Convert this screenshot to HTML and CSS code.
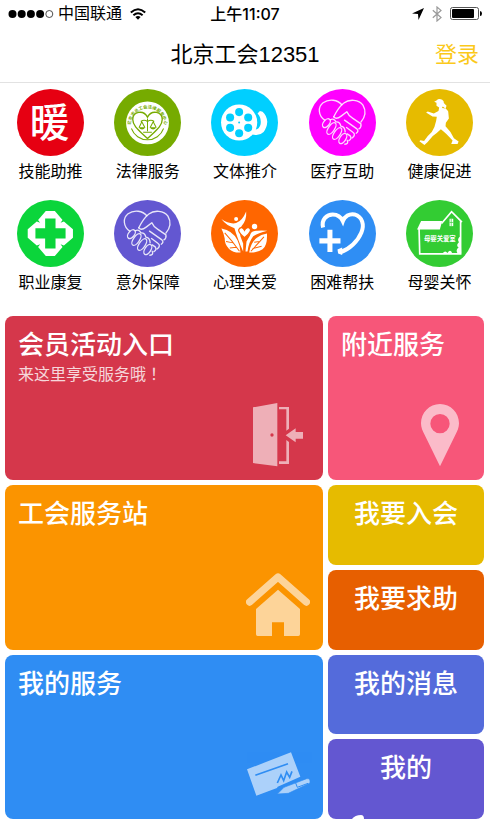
FILE: index.html
```html
<!DOCTYPE html>
<html lang="zh-CN">
<head>
<meta charset="utf-8">
<meta name="viewport" content="width=device-width, initial-scale=1">
<title>北京工会12351</title>
<link rel="stylesheet" href="styles.css">
</head>
<body>
<div class="status">
  <div class="status-side">
    <svg class="signal" viewBox="0 0 46 10" width="46" height="10" aria-hidden="true"><circle cx="4.500" cy="5" r="4"/><circle cx="13.700" cy="5" r="4"/><circle cx="22.900" cy="5" r="4"/><circle cx="32.100" cy="5" r="4"/><circle cx="41.300" cy="5" r="3.500" fill="none" stroke="#222" stroke-width=".8"/></svg>
    <span>中国联通</span>
    <svg class="wifi" viewBox="0 0 16 12" width="16" height="12" fill="none" stroke="#000" stroke-width="2" aria-hidden="true"><path d="M.8 4.500Q8-2 15.200 4.500M3.400 7.200Q8 3.200 12.600 7.200"/><path d="M5.400 9Q8 7 10.600 9L8 11.700Z" fill="#000" stroke="none"/></svg>
  </div>
  <time class="clock">上午11:07</time>
  <div class="status-side status-end">
    <svg viewBox="0 0 12 12" width="12" height="12" aria-hidden="true"><path d="M12 0L6.500 12L6 6L0 5.500Z"/></svg>
    <svg viewBox="0 0 10 16" width="10" height="16" fill="none" stroke="#999" stroke-width="1.200" aria-hidden="true"><path d="M.8 4.200L9 11.600L5 15V1L9 4.400L.8 11.800"/></svg>
    <svg viewBox="0 0 32 13" width="32" height="13" aria-hidden="true"><rect x=".5" y=".5" width="28" height="12" rx="2" fill="none" stroke="#555"/><rect x="2" y="2" width="22" height="9" rx="1"/><path d="M30 4Q32 4 32 6.500Q32 9 30 9Z"/></svg>
  </div>
</div>
<header class="nav">
  <h1>北京工会12351</h1>
  <a class="login" href="#">登录</a>
</header>
<nav class="services">
  <a href="#" class="service">
    <svg viewBox="0 0 200 200" aria-hidden="true"><circle cx="100" cy="100" r="100" fill="#e60012"/><text x="97" y="142" class="seal">暖</text></svg>
    <span>技能助推</span>
  </a>
  <a href="#" class="service">
    <svg viewBox="0 0 200 200" aria-hidden="true"><circle cx="100" cy="100" r="100" fill="#76ab00"/><circle cx="100" cy="101" r="64" fill="#fff"/>
      <path id="ring" d="M50 108A50 50 0 1 1 150 108" fill="none"/>
      <text class="ring-text"><textPath href="#ring" startOffset="50%">北京市总工会法律服务中心</textPath></text>
      <g fill="none" stroke="#76ab00" stroke-width="4"><path d="M52 118A51 51 0 0 0 148 118" stroke-width="3"/><path d="M100 148C78 126 56 112 56 91C56 67 88 61 100 84C112 61 144 67 144 91C144 112 122 126 100 148Z"/>
      <path d="M100 88V126M80 97Q90 90 100 97Q110 90 120 97M87 129H113M83 98L75 115M83 98L92 115M117 98L108 115M117 98L126 115" stroke-width="3"/></g>
      <path d="M73 114H94Q84 128 73 114ZM106 114H127Q117 128 106 114Z" fill="#76ab00"/></svg>
    <span>法律服务</span>
  </a>
  <a href="#" class="service">
    <svg viewBox="0 0 200 200" aria-hidden="true"><circle cx="100" cy="100" r="100" fill="#00cfff"/>
      <path d="M146 66L139 73Q151 86 148 105Q145 120 130 122L120 134Q142 143 157 128Q167 116 168 98Q166 78 154 68Z" fill="#fff"/>
      <circle cx="84" cy="100" r="54" fill="#fff"/><g fill="#00cfff"><circle cx="84" cy="69" r="12"/><circle cx="84" cy="132" r="12"/><circle cx="57" cy="85" r="12"/><circle cx="111" cy="85" r="12"/><circle cx="57" cy="116" r="12"/><circle cx="111" cy="116" r="12"/><circle cx="84" cy="100" r="3"/></g></svg>
    <span>文体推介</span>
  </a>
  <a href="#" class="service">
    <svg viewBox="0 0 200 200" aria-hidden="true"><circle cx="100" cy="100" r="100" fill="#ff00ff"/>
      <g id="hands" fill="none" stroke="#fff" stroke-opacity=".85" stroke-width="4" stroke-linecap="round" stroke-linejoin="round">
        <path d="M47 93C28 80 25 54 42 41C60 28 86 32 98 47"/>
        <path d="M74 83C82 67 91 52 104 42C120 29 149 31 161 48C171 65 167 84 155 99"/>
        <path d="M74 83C80 91 88 87 96 81L113 68Q118 80 130 87L155 104Q157 114 149 119"/>
        <path d="M106 93L143 119Q150 126 141 132M112 115L131 129Q141 136 129 146M114 134L123 140Q129 149 119 154M114 153Q119 164 107 165"/>
        <ellipse cx="52" cy="102" rx="9" ry="15" transform="rotate(38 52 102)"/><ellipse cx="67" cy="118" rx="9" ry="20" transform="rotate(35 67 118)"/><ellipse cx="84" cy="133" rx="9" ry="20" transform="rotate(35 84 133)"/><ellipse cx="101" cy="148" rx="9" ry="17" transform="rotate(32 101 148)"/>
        <path d="M63 92Q75 86 80 98Q93 97 95 111Q107 112 108 128"/>
      </g></svg>
    <span>医疗互助</span>
  </a>
  <a href="#" class="service">
    <svg viewBox="0 0 200 200" aria-hidden="true"><circle cx="100" cy="100" r="100" fill="#e6bb00"/>
      <path fill="#fff" d="M84 38L91 34Q98 27 108 32Q114 36 113 42L121 50L118 59L110 52L107 57Q121 57 126 67L128 88L119 101L118 111Q133 125 143 147L157 157L154 164H135L139 154Q120 132 104 120Q91 133 80 140L64 159L55 167L40 156L43 153L54 155Q64 139 77 128Q87 113 90 95L92 83L79 82L60 70L65 67L83 73L97 66L99 55L91 50V41Z"/></svg>
    <span>健康促进</span>
  </a>
  <a href="#" class="service">
    <svg viewBox="0 0 200 200" aria-hidden="true"><circle cx="100" cy="100" r="100" fill="#0bd53b"/>
      <path fill="#fff" d="M63 60L86 33H113L136 60L130 68L140 64L167 87V113L140 136L130 132L136 140L113 167H86L63 140L69 132L59 136L32 113V87L59 64L69 68Z"/>
      <path fill="#0bd53b" d="M84 55H115V84H145V115H115V145H84V115H55V84H84Z"/></svg>
    <span>职业康复</span>
  </a>
  <a href="#" class="service">
    <svg viewBox="0 0 200 200" aria-hidden="true"><circle cx="100" cy="100" r="100" fill="#6357d1"/><use href="#hands"/></svg>
    <span>意外保障</span>
  </a>
  <a href="#" class="service">
    <svg viewBox="0 0 200 200" aria-hidden="true"><circle cx="100" cy="100" r="100" fill="#ff6600"/>
      <g fill="#fff"><circle cx="75" cy="57" r="6"/><circle cx="130" cy="79" r="8"/>
      <path d="M31 57Q54 73 75 69Q94 61 105 34Q107 60 91 78Q83 89 88 109L96 130V154Q78 112 70 84Q46 77 31 57Z"/>
      <path d="M168 92Q150 90 138 92Q119 91 116 107L106 124L103 154H109Q112 126 126 108Q137 101 168 92Z"/>
      <path d="M31 85Q65 91 79 120Q88 138 88 157Q66 158 54 146Q40 132 41 115Q38 98 31 85Z"/>
      <path d="M167 100Q169 135 154 147Q138 158 114 157Q119 126 137 113Q149 103 167 100Z"/></g>
      <path d="M41 98Q63 121 85 153M45 124L66 128M56 143L76 141M158 110Q142 128 119 153M129 126L145 124M124 145L151 138" fill="none" stroke="#ff6600" stroke-width="3"/>
      <path d="M100 113C89 102 80 96 83 88C88 79 96 82 100 90C104 82 114 79 118 88C120 96 110 103 100 113Z" fill="#fff" stroke="#ff6600" stroke-width="4"/></svg>
    <span>心理关爱</span>
  </a>
  <a href="#" class="service">
    <svg viewBox="0 0 200 200" aria-hidden="true"><circle cx="100" cy="100" r="100" fill="#2f8ef4"/>
      <path d="M42 82C36 58 54 43 71 43C86 43 96 52 101 63C106 48 121 40 136 43C160 50 166 75 156 98C146 123 121 147 94 156" fill="none" stroke="#fff" stroke-width="12"/><path d="M85 148L99 142V164L87 160Z" fill="#fff"/>
      <path d="M55 89H70V114H94V130H70V155H55V130H31V114H55Z" fill="#fff"/></svg>
    <span>困难帮扶</span>
  </a>
  <a href="#" class="service">
    <svg viewBox="0 0 200 200" aria-hidden="true"><circle cx="100" cy="100" r="100" fill="#33cc33"/>
      <path d="M45 63H108L101 88H33Z" fill="#fff"/><path d="M106 70L136 35L167 66M39 86L41 161H163V62" fill="none" stroke="#fff" stroke-width="5"/>
      <rect x="130" y="56" width="11" height="22" fill="#fff"/><path d="M135 56V78M130 67H141" stroke="#33cc33" stroke-width="2"/>
      <path d="M163 108Q151 115 158 126Q148 135 157 142Q147 149 154 160H165ZM110 158Q117 149 124 158Q132 145 138 159" fill="#fff"/>
      <text x="101" y="122" class="sign">母婴关爱室</text></svg>
    <span>母婴关怀</span>
  </a>
</nav>
<main class="tiles">
  <a href="#" class="tile wide red">
    <h2>会员活动入口</h2>
    <p>来这里享受服务哦！</p>
    <svg class="tile-icon" viewBox="33 27 192 192" aria-hidden="true"><path fill-rule="evenodd" d="M54 40L127 27V217L54 207ZM111 118A5 5 0 1 0 111 128A5 5 0 1 0 111 118Z"/><path d="M132 39H162V104L154 110V46H132ZM154 138L162 144V210H132V202H154ZM152 124L182 103V114H204V134H182V145Z"/></svg>
  </a>
  <a href="#" class="tile tall pink">
    <h2>附近服务</h2>
    <svg class="tile-icon" viewBox="516 27 192 192" aria-hidden="true"><path fill-rule="evenodd" d="M615 30C583 30 558 56 558 88C558 101 563 111 568 121L615 217L662 121C667 111 672 101 672 88C672 56 647 30 615 30ZM615 60A29 29 0 1 1 615 118A29 29 0 1 1 615 60Z"/></svg>
  </a>
  <a href="#" class="tile wide orange">
    <h2>工会服务站</h2>
    <svg class="tile-icon" viewBox="33 42 192 192" aria-hidden="true"><path d="M44 129L129 54L214 129" fill="none" stroke="#fff" stroke-width="22" stroke-linecap="round" stroke-linejoin="round"/><path d="M63 150L129 92L195 150V226Q195 231 190 231H147V190H111V231H68Q63 231 63 226Z"/></svg>
  </a>
  <a href="#" class="tile small yellow"><h2>我要入会</h2></a>
  <a href="#" class="tile small rust"><h2>我要求助</h2></a>
  <a href="#" class="tile wide blue">
    <h2>我的服务</h2>
    <svg class="tile-icon" viewBox="33 26 192 192" aria-hidden="true"><path d="M36 108L168 57L196 130L128 160L126 164L64 187Z"/><path d="M61 126L159 91M127 149L138 125L146 142L155 116L164 132L171 114" fill="none" stroke="#2f8df3" stroke-width="5"/><path d="M127 182L147 162L215 136Q227 134 225 149L160 180Z" stroke="#2f8df3" stroke-width="2"/><path d="M182 149L187 162L219 150" fill="none" stroke="#2f8df3" stroke-width="3"/></svg>
  </a>
  <a href="#" class="tile small indigo"><h2>我的消息</h2></a>
  <a href="#" class="tile small purple">
    <h2>我的</h2>
    <svg class="peek" viewBox="0 0 14 4" width="14" height="4" aria-hidden="true"><path d="M0 4Q3 0 9 0Q12 0 12 4Z" fill="#fff"/></svg>
  </a>
</main>
</body>
</html>
```

FILE: styles.css
```css
* { box-sizing: border-box; }

body {
  margin: 0;
  min-height: 100vh;
  display: flex;
  flex-direction: column;
  background: #fff;
  color: #000;
  font-family: "Liberation Sans", "Noto Sans CJK SC", sans-serif;
}

a { color: inherit; text-decoration: none; }
h1, h2, p { margin: 0; font-weight: 400; }
svg { display: block; flex: none; }

.status {
  display: grid;
  grid-template-columns: 1fr auto 1fr;
  align-items: center;
  height: 27px;
  padding: 0 8px;
  font-size: 16px;
  line-height: 24px;
}
.status-side { display: flex; align-items: center; gap: 4px; }
.wifi { margin-left: 4px; }
.status-end { justify-content: flex-end; gap: 8px; }
.clock { font-family: Inter, "Noto Sans CJK SC", sans-serif; font-weight: 500; }

.nav {
  display: grid;
  grid-template-columns: 1fr auto 1fr;
  align-items: center;
  height: 56px;
  padding: 0 11px;
  border-bottom: 1px solid #e2e2e2;
}
.nav h1 { grid-column: 2; font-size: 22px; line-height: 32px; }
.login { justify-self: end; color: #fbc91b; font-size: 22px; line-height: 32px; }

.services {
  display: grid;
  grid-template-columns: repeat(5, 1fr);
  row-gap: 16px;
  padding: 6px 2px 21px;
}
.service {
  display: flex;
  flex-direction: column;
  align-items: center;
  gap: 4px;
  font-size: 16px;
  line-height: 24px;
}
.service svg { width: 67px; height: 67px; }

.seal {
  fill: #fff;
  font-family: "Noto Sans CJK SC", sans-serif;
  font-size: 118px;
  font-weight: 500;
  text-anchor: middle;
}
.ring-text { fill: #76ab00; font-size: 13px; font-weight: 700; text-anchor: middle; }
.sign { fill: #fff; font-size: 19px; font-weight: 700; text-anchor: middle; }

.tiles {
  flex: 1 0 auto;
  display: grid;
  grid-template-columns: 318fr 156fr;
  grid-template-rows: repeat(6, minmax(76px, 1fr));
  grid-auto-flow: row dense;
  gap: 5px;
  padding: 0 6px 0 5px;
}
.tile {
  position: relative;
  display: flex;
  flex-direction: column;
  overflow: hidden;
  padding: 13px;
  border-radius: 8px;
  color: #fff;
}
.tile h2 { font-size: 26px; line-height: 32px; font-weight: 500; }
.tile p {
  font-family: "Noto Sans CJK TC", sans-serif;
  font-feature-settings: "locl" 0;
  font-size: 16px;
  line-height: 24px;
  opacity: .8;
}
.wide { grid-column: 1; grid-row: span 2; }
.tall { grid-column: 2; grid-row: span 2; }
.small { grid-column: 2; align-items: center; padding-bottom: 0; }

.tile-icon {
  width: 64px;
  height: 64px;
  margin-top: auto;
  align-self: flex-end;
  fill: #fff;
  opacity: .6;
}
.peek { position: absolute; left: 24px; bottom: 0; }

.red { background: #d5374b; }
.pink { background: #f75679; }
.orange { background: #fb9400; }
.yellow { background: #e6bb00; }
.rust { background: #e75f00; }
.blue { background: #2f8df3; }
.indigo { background: #546bdb; }
.purple { background: #6357d1; }
```
